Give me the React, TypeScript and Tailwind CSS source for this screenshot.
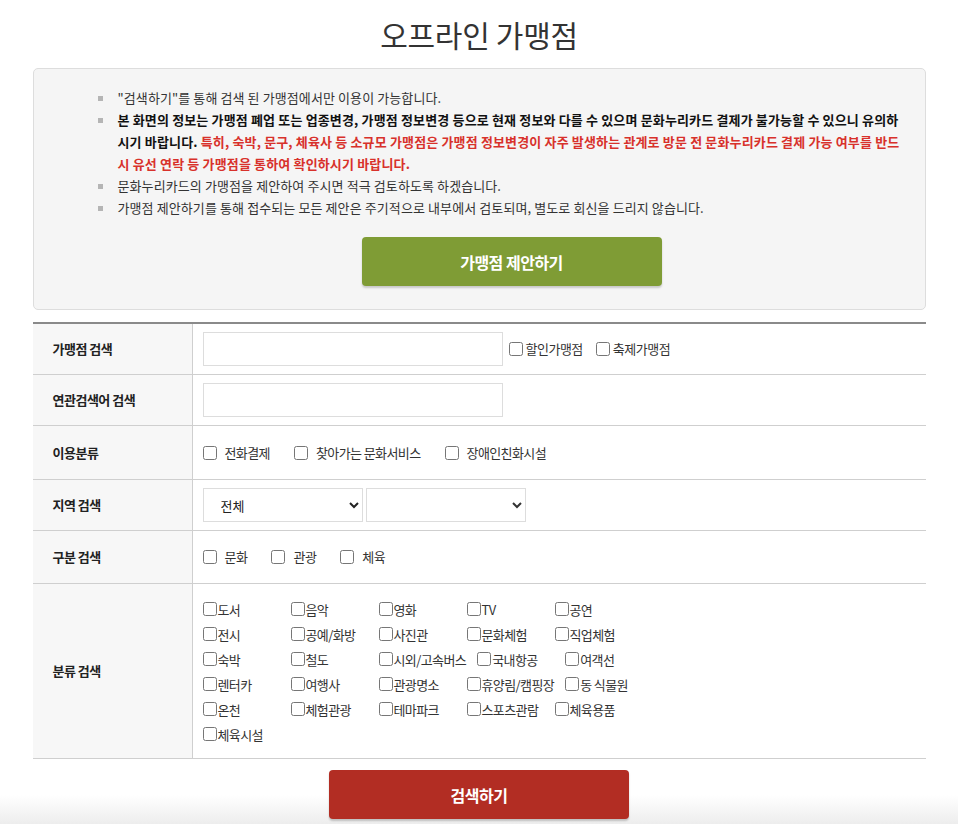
import React from 'react';

const font = { fontFamily: '"Noto Sans CJK KR", "Noto Sans", sans-serif' };

const useTypes = ['전화결제', '찾아가는 문화서비스', '장애인친화시설'];
const kinds = ['문화', '관광', '체육'];
const categories = [
  '도서', '음악', '영화', 'TV', '공연',
  '전시', '공예/화방', '사진관', '문화체험', '직업체험',
  '숙박', '철도', '시외/고속버스', '국내항공', '여객선',
  '렌터카', '여행사', '관광명소', '휴양림/캠핑장', '동 식물원',
  '온천', '체험관광', '테마파크', '스포츠관람', '체육용품',
  '체육시설',
];

const Bullet = () => (
  <span className="w-[20px] shrink-0 pt-[9px]">
    <span className="block w-[5px] h-[5px] bg-[#b5b5b5]" />
  </span>
);

const Row: React.FC<{ label: string; className: string; children: React.ReactNode }> = ({ label, className, children }) => (
  <div className={`grid grid-cols-[160px_1fr] border-b border-[#cfcfcf] ${className}`}>
    <div className="bg-[#f7f7f7] border-r border-[#cfcfcf] pl-[20px] flex items-center text-[13px] font-bold text-[#222] tracking-[-0.5px]">
      {label}
    </div>
    <div className="pl-[10px] flex items-center">{children}</div>
  </div>
);

const App: React.FC = () => {
  return (
    <div className="bg-white min-h-[824px] text-[#333]" style={font}>
      <div className="w-[893px] mx-auto">
        <h1 className="h-[68px] flex items-center justify-center text-[30px] font-normal tracking-[-0.3px] text-[#333]">
          오프라인 가맹점
        </h1>

        {/* notice box */}
        <div className="bg-[#f5f5f5] border border-[#dddddd] rounded-[5px] pt-[18px] pb-[23px]">
          <ul className="pl-[64px] pr-[22px] text-[13px] leading-[22px] tracking-[0.1px]">
            <li className="flex">
              <Bullet />
              <span>"검색하기"를 통해 검색 된 가맹점에서만 이용이 가능합니다.</span>
            </li>
            <li className="flex">
              <Bullet />
              <span className="font-bold tracking-[0.15px]">
                <span className="text-[#111]">
                  본 화면의 정보는 가맹점 폐업 또는 업종변경, 가맹점 정보변경 등으로 현재 정보와 다를 수 있으며 문화누리카드 결제가 불가능할 수 있으니 유의하시기 바랍니다.
                </span>{' '}
                <span className="text-[#d8312b]">
                  특히, 숙박, 문구, 체육사 등 소규모 가맹점은 가맹점 정보변경이 자주 발생하는 관계로 방문 전 문화누리카드 결제 가능 여부를 반드시 유선 연락 등 가맹점을 통하여 확인하시기 바랍니다.
                </span>
              </span>
            </li>
            <li className="flex">
              <Bullet />
              <span>문화누리카드의 가맹점을 제안하여 주시면 적극 검토하도록 하겠습니다.</span>
            </li>
            <li className="flex">
              <Bullet />
              <span>가맹점 제안하기를 통해 접수되는 모든 제안은 주기적으로 내부에서 검토되며, 별도로 회신을 드리지 않습니다.</span>
            </li>
          </ul>
          <button className="block ml-[328px] mt-[18px] w-[300px] h-[49px] rounded-[4px] bg-[#7f9c35] text-white text-[16px] font-bold tracking-[-0.5px] shadow-[0_2px_2px_rgba(0,0,0,0.18)]">
            가맹점 제안하기
          </button>
        </div>

        {/* search table */}
        <div className="mt-[12px] border-t-2 border-[#8a8a8a]">
          <Row label="가맹점 검색" className="h-[51px]">
            <input className="w-[300px] h-[34px] border border-[#dddddd] bg-white" />
            <label className="flex items-center ml-[6px] text-[13px] tracking-[-0.5px]">
              <input type="checkbox" className="w-[14px] h-[14px] mr-[3px]" />
              할인가맹점
            </label>
            <label className="flex items-center ml-[13px] text-[13px] tracking-[-0.5px]">
              <input type="checkbox" className="w-[14px] h-[14px] mr-[3px]" />
              축제가맹점
            </label>
          </Row>
          <Row label="연관검색어 검색" className="h-[51px]">
            <input className="w-[300px] h-[34px] border border-[#dddddd] bg-white" />
          </Row>
          <Row label="이용분류" className="h-[54px]">
            <div className="flex items-center gap-[24px] text-[13px] tracking-[-0.6px]">
              {useTypes.map((t) => (
                <label key={t} className="flex items-center gap-[8px]">
                  <input type="checkbox" className="w-[14px] h-[14px]" />
                  {t}
                </label>
              ))}
            </div>
          </Row>
          <Row label="지역 검색" className="h-[51px]">
            <select className="w-[160px] h-[34px] border border-[#dddddd] bg-white pl-[13px] pr-[8px] text-[13px] text-[#222]">
              <option>전체</option>
            </select>
            <select className="ml-[3px] w-[160px] h-[34px] border border-[#dddddd] bg-white pl-[13px] pr-[8px] text-[13px]">
              <option></option>
            </select>
          </Row>
          <Row label="구분 검색" className="h-[53px]">
            <div className="flex items-center gap-[24px] text-[13px] tracking-[-0.5px]">
              {kinds.map((t) => (
                <label key={t} className="flex items-center gap-[8px]">
                  <input type="checkbox" className="w-[14px] h-[14px]" />
                  {t}
                </label>
              ))}
            </div>
          </Row>
          <Row label="분류 검색" className="h-[175px]">
            <div className="flex flex-wrap w-[480px] pt-[1px] text-[13px] leading-[25px] tracking-[-0.6px]">
              {categories.map((c) => (
                <label key={c} className="flex items-center min-w-[88px] pr-[11px]">
                  <input type="checkbox" className="w-[14px] h-[14px] mr-[1px]" />
                  {c}
                </label>
              ))}
            </div>
          </Row>
        </div>
      </div>

      <div className="pt-[11px] h-[65px] bg-[linear-gradient(to_bottom,#ffffff_36px,#ededed_65px)]">
        <button className="block mx-auto w-[300px] h-[49px] rounded-[4px] bg-[#b22d23] text-white text-[16px] font-bold tracking-[-0.5px] shadow-[0_2px_2px_rgba(0,0,0,0.2)]">
          검색하기
        </button>
      </div>
    </div>
  );
};

export default App;
